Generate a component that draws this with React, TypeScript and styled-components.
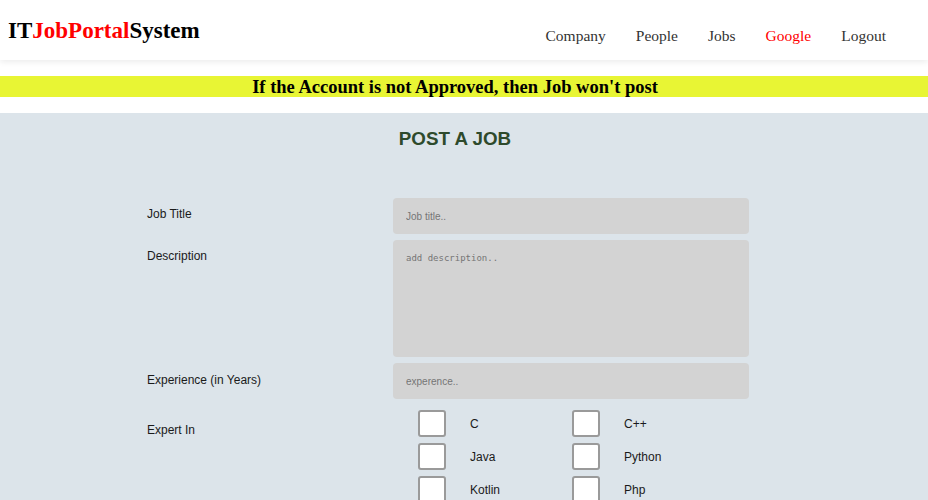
import React from 'react'
import styled, { createGlobalStyle } from 'styled-components'

const GlobalStyle = createGlobalStyle`
  html, body {
    margin: 0;
    padding: 0;
    background: #ffffff;
  }
  * {
    box-sizing: border-box;
  }
`

const Header = styled.header`
  height: 60px;
  display: flex;
  justify-content: space-between;
  align-items: flex-start;
  padding: 0 42px 0 8px;
  background: #ffffff;
  box-shadow: 0 2px 6px rgba(0, 0, 0, 0.08);
`

const Logo = styled.h1`
  margin: 0;
  padding-top: 18px;
  font-family: "Liberation Serif", "Times New Roman", serif;
  font-size: 23px;
  font-weight: bold;
  color: #000000;
  span {
    color: #ff0000;
  }
`

const Nav = styled.nav`
  display: flex;
  gap: 30px;
  margin-top: 27px;
`

const NavLink = styled.a<{ $active?: boolean }>`
  font-family: "Liberation Serif", "Times New Roman", serif;
  font-size: 15.5px;
  color: ${p => (p.$active ? '#ff0000' : '#333333')};
  text-decoration: none;
  cursor: pointer;
`

// the centred texts sit a little left of the page middle
const Banner = styled.h2`
  margin: 16px 0 0;
  padding-right: 18px;
  height: 21px;
  line-height: 22px;
  background: #e8f534;
  text-align: center;
  font-family: "Liberation Serif", "Times New Roman", serif;
  font-size: 18.5px;
  font-weight: bold;
  color: #000000;
`

const Section = styled.section`
  margin-top: 16px;
  background: #dce4ea;
  min-height: 387px;
  padding: 15px 0 40px;
`

const Title = styled.h3`
  margin: 0 0 48px;
  padding-right: 18px;
  text-align: center;
  font-family: "Liberation Sans", Arial, sans-serif;
  font-size: 18.8px;
  font-weight: bold;
  color: #2e4a2c;
`

const Form = styled.form`
  display: grid;
  grid-template-columns: 246px 356px;
  row-gap: 6px;
  padding-left: 147px;
`

const Label = styled.label<{ $offset: number }>`
  padding-top: ${p => p.$offset}px;
  font-family: "Liberation Sans", Arial, sans-serif;
  font-size: 12px;
  color: #1a1a1a;
`

const TextInput = styled.input`
  height: 36px;
  width: 100%;
  border: none;
  border-radius: 4px;
  background: #d3d3d3;
  padding: 0 13px;
  font-family: "Liberation Sans", Arial, sans-serif;
  font-size: 10px;
  color: #333333;
  outline: none;
  &::placeholder {
    color: #757575;
  }
`

const TextArea = styled.textarea`
  height: 117px;
  width: 100%;
  border: none;
  border-radius: 4px;
  background: #d3d3d3;
  padding: 13px 13px;
  resize: none;
  font-family: "DejaVu Sans Mono", "Liberation Mono", monospace;
  font-size: 9px;
  color: #333333;
  outline: none;
  &::placeholder {
    color: #757575;
  }
`

const SkillGrid = styled.div`
  display: grid;
  grid-template-columns: 154px 154px;
  row-gap: 6px;
  padding-top: 5px;
`

const Skill = styled.label`
  display: flex;
  align-items: center;
  gap: 24px;
  padding-left: 25px;
  font-family: "Liberation Sans", Arial, sans-serif;
  font-size: 12px;
  color: #1a1a1a;
`

const Box = styled.input`
  appearance: none;
  margin: 0;
  width: 28px;
  height: 27px;
  background: #ffffff;
  border: 2px solid #9a9a9a;
  border-radius: 3px;
  cursor: pointer;
  &:checked {
    background: #3b82f6;
  }
`

const skills = ['C', 'C++', 'Java', 'Python', 'Kotlin', 'Php']

const App = () => {
  return (
    <>
      <GlobalStyle />
      <Header>
        <Logo>IT<span>JobPortal</span>System</Logo>
        <Nav>
          <NavLink>Company</NavLink>
          <NavLink>People</NavLink>
          <NavLink>Jobs</NavLink>
          <NavLink $active>Google</NavLink>
          <NavLink>Logout</NavLink>
        </Nav>
      </Header>
      <Banner>If the Account is not Approved, then Job won't post</Banner>
      <Section>
        <Title>POST A JOB</Title>
        <Form onSubmit={e => e.preventDefault()}>
          <Label $offset={9}>Job Title</Label>
          <TextInput type="text" placeholder="Job title.." />
          <Label $offset={9}>Description</Label>
          <TextArea placeholder="add description.." />
          <Label $offset={10}>Experience (in Years)</Label>
          <TextInput type="number" placeholder="experence.." />
          <Label $offset={18}>Expert In</Label>
          <SkillGrid>
            {skills.map(s => (
              <Skill key={s}>
                <Box type="checkbox" />
                {s}
              </Skill>
            ))}
          </SkillGrid>
        </Form>
      </Section>
    </>
  )
}

export default App
